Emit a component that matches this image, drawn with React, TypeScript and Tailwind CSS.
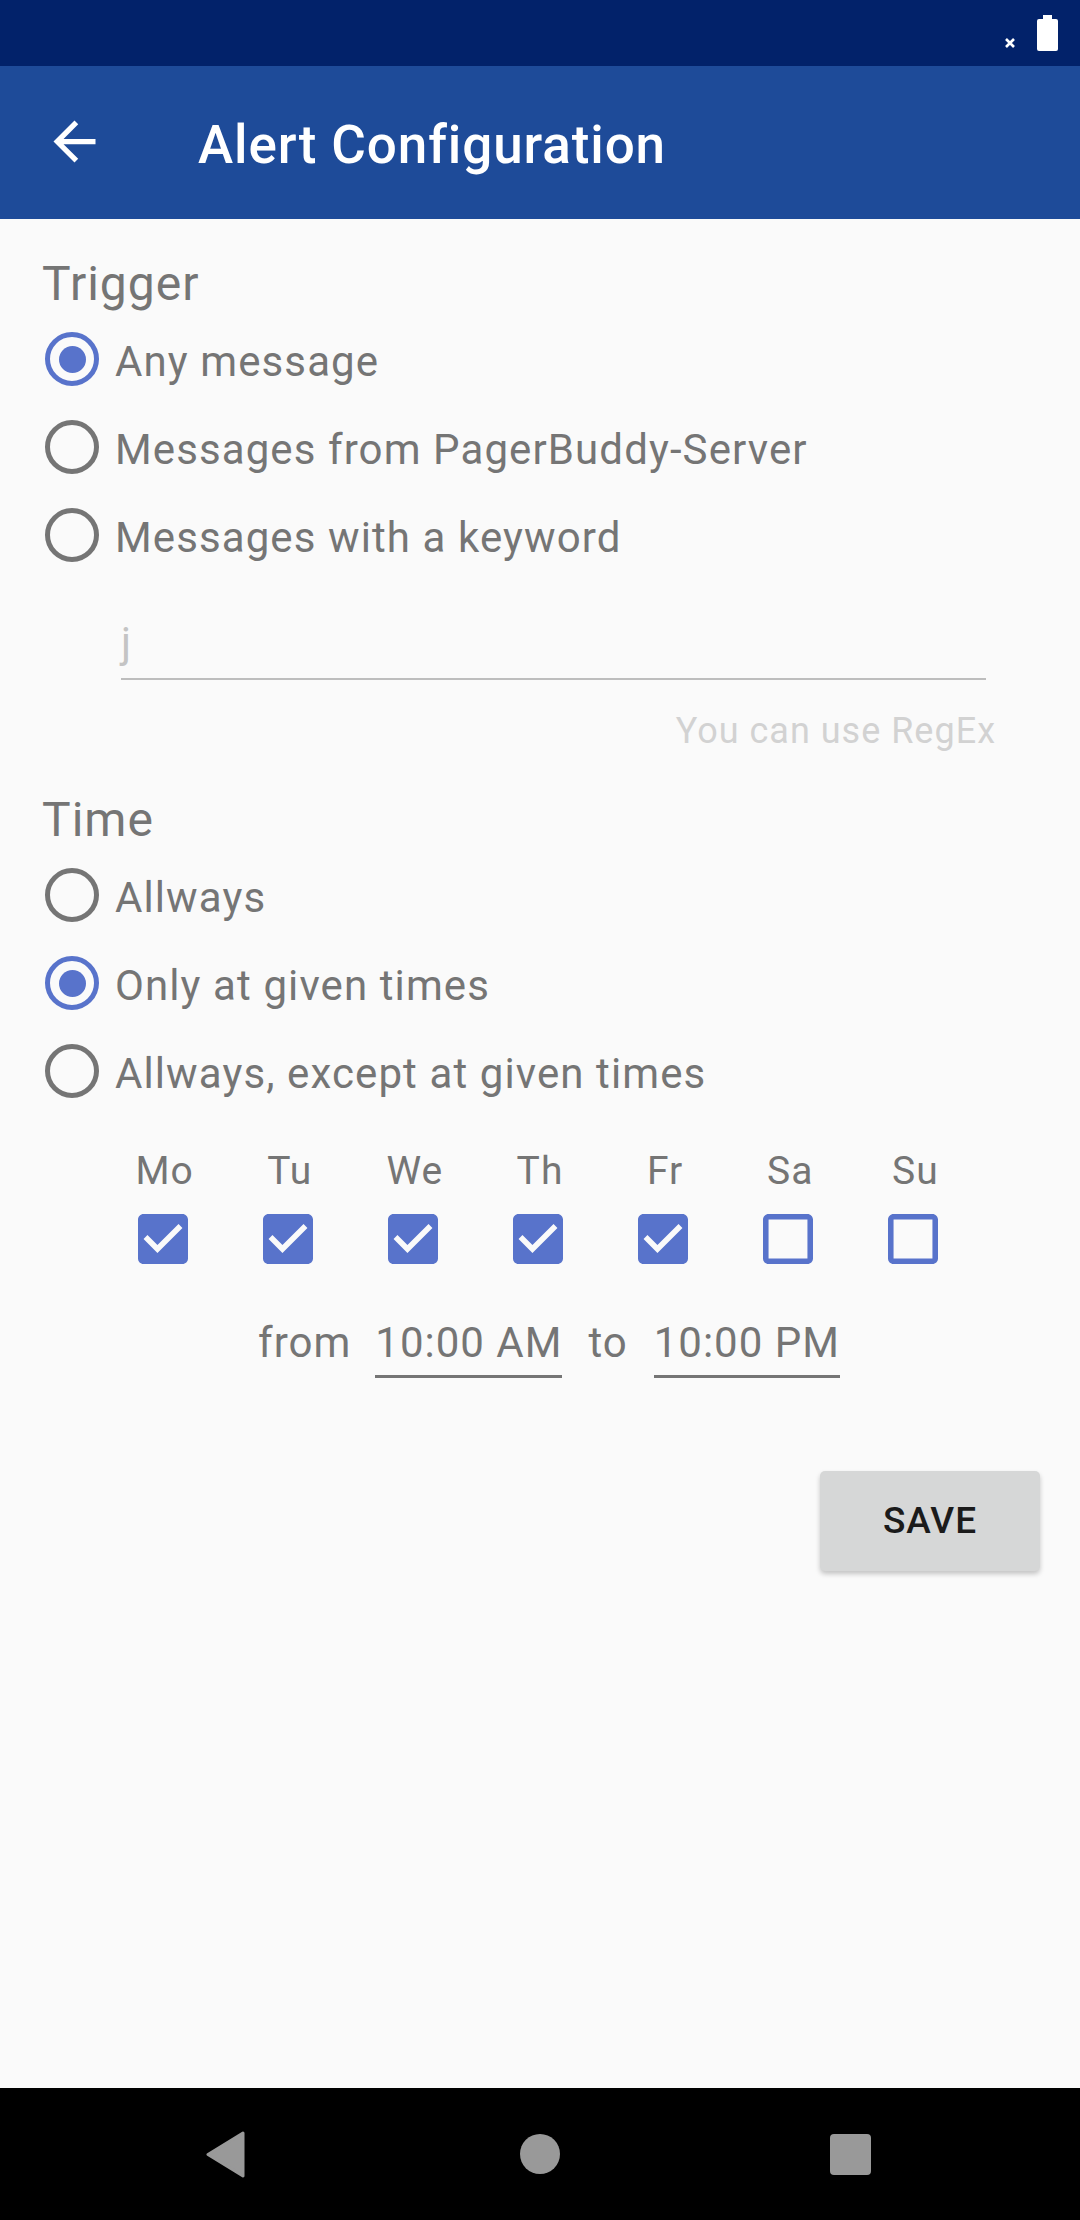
import React from 'react';

const days = [
  { label: 'Mo', checked: true },
  { label: 'Tu', checked: true },
  { label: 'We', checked: true },
  { label: 'Th', checked: true },
  { label: 'Fr', checked: true },
  { label: 'Sa', checked: false },
  { label: 'Su', checked: false },
];

function Radio({ label, checked = false }: { label: string; checked?: boolean }) {
  return (
    <div className="h-[88px] flex items-center">
      <div
        className={
          'ml-[3px] w-[54px] h-[54px] rounded-full border-[5px] flex items-center justify-center ' +
          (checked ? 'border-[#5873cb]' : 'border-[#757575]')
        }
      >
        {checked && <div className="w-[27px] h-[27px] rounded-full bg-[#5873cb]" />}
      </div>
      <span className="ml-[16px] pt-[5px] text-[42px] leading-[49px] tracking-[1.1px] text-[#757575]">{label}</span>
    </div>
  );
}

function CheckBox({ checked }: { checked: boolean }) {
  return (
    <svg width="50" height="50" viewBox="3 3 18 18" fill="#5873cb">
      {checked ? (
        <path d="M19 3H5c-1.11 0-2 .9-2 2v14c0 1.1.89 2 2 2h14c1.11 0 2-.9 2-2V5c0-1.1-.89-2-2-2zm-9 14l-5-5 1.41-1.41L10 14.17l7.59-7.59L19 8l-9 9z" />
      ) : (
        <path d="M19 5v14H5V5h14m0-2H5c-1.1 0-2 .9-2 2v14c0 1.1.9 2 2 2h14c1.1 0 2-.9 2-2V5c0-1.1-.9-2-2-2z" />
      )}
    </svg>
  );
}

export default function App() {
  return (
    <div className="w-[1080px] h-[2220px] flex flex-col bg-[#fafafa] font-['Roboto',sans-serif]">
      {/* status bar */}
      <div className="h-[66px] bg-[#02226a] flex items-start justify-end pr-[22px]">
        <svg width="12" height="12" viewBox="0 0 12 12" className="mt-[37px] mr-[21px]">
          <path d="M2 2L10 10M10 2L2 10" stroke="white" strokeWidth="2.6" />
        </svg>
        <svg width="21" height="36" viewBox="0 0 21 36" className="mt-[15px]">
          <rect x="6" y="0" width="9" height="5" fill="white" />
          <rect x="0" y="4" width="21" height="32" rx="2" fill="white" />
        </svg>
      </div>

      {/* app bar */}
      <div className="h-[153px] bg-[#1e4b99] flex items-center">
        <svg width="63" height="63" viewBox="0 0 24 24" fill="white" className="ml-[43px] mb-[2px]">
          <path d="M20 11H7.83l5.59-5.59L12 4l-8 8 8 8 1.41-1.41L7.83 13H20v-2z" />
        </svg>
        <h1 className="ml-[92px] mt-[4px] text-[53px] leading-[62px] font-medium tracking-[0.9px] text-white">
          Alert Configuration
        </h1>
      </div>

      <main className="flex-1 flex flex-col px-[42px]">
        <h2 className="mt-[37px] text-[48px] leading-[56px] tracking-[1px] text-[#757575]">Trigger</h2>
        <div className="mt-[3px] flex flex-col">
          <Radio checked label="Any message" />
          <Radio label="Messages from PagerBuddy-Server" />
          <Radio label="Messages with a keyword" />
        </div>

        <div className="ml-[79px] mr-[52px] mt-[39px] pb-[11px] border-b-2 border-[#bdbdbd] text-[42px] leading-[49px] text-[#c4c4c4]">
          j
        </div>
        <p className="mt-[30px] mr-[42px] text-right text-[36px] leading-[42px] tracking-[1px] text-[#d2d2d2]">
          You can use RegEx
        </p>

        <h2 className="mt-[40px] text-[48px] leading-[56px] tracking-[1px] text-[#757575]">Time</h2>
        <div className="mt-[3px] flex flex-col">
          <Radio label="Allways" />
          <Radio checked label="Only at given times" />
          <Radio label="Allways, except at given times" />
        </div>

        <div className="ml-[60px] w-[876px] mt-[33px] grid grid-cols-7">
          {days.map((d) => (
            <span key={d.label} className="text-center text-[39px] leading-[46px] tracking-[1px] text-[#757575]">
              {d.label}
            </span>
          ))}
        </div>
        <div className="ml-[58px] w-[876px] mt-[20px] grid grid-cols-7">
          {days.map((d) => (
            <div key={d.label} className="flex justify-center">
              <CheckBox checked={d.checked} />
            </div>
          ))}
        </div>

        <div className="mt-[54px] ml-[18px] flex justify-center items-start text-[42px] leading-[49px] tracking-[1px] text-[#757575]">
          <span>from</span>
          <span className="ml-[24px] pb-[8px] border-b-[3px] border-[#757575]">10:00 AM</span>
          <span className="ml-[26px]">to</span>
          <span className="ml-[26px] pb-[8px] border-b-[3px] border-[#757575]">10:00 PM</span>
        </div>

        <div className="mt-[93px] mr-[-2px] flex justify-end">
          <button className="w-[220px] h-[100px] rounded-[5px] bg-[#d6d7d7] shadow-[0_3px_5px_rgba(0,0,0,0.22)] text-[37px] font-medium tracking-[1px] text-[#1b1b1b]">
            SAVE
          </button>
        </div>
      </main>

      {/* navigation bar */}
      <div className="h-[132px] bg-black flex items-center">
        <svg width="40" height="47" viewBox="0 0 40 47" className="ml-[206px]">
          <path d="M37 2L2 23.5L37 45Z" fill="#999999" stroke="#999999" strokeWidth="3" strokeLinejoin="round" />
        </svg>
        <div className="ml-[274px] w-[40px] h-[40px] rounded-full bg-[#999999]" />
        <div className="ml-[270px] w-[41px] h-[41px] rounded-[4px] bg-[#999999]" />
      </div>
    </div>
  );
}
